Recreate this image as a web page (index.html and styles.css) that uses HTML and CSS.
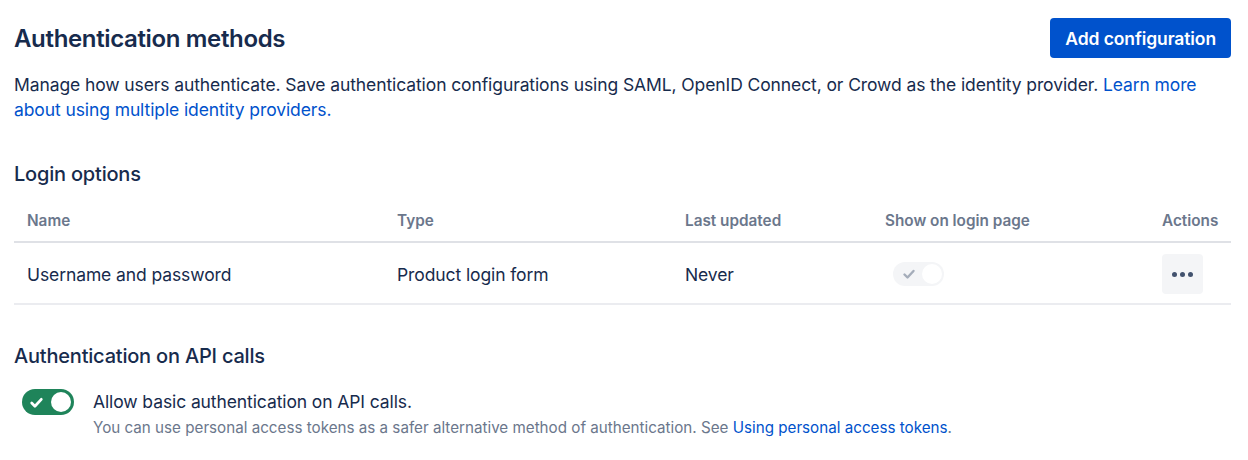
FILE: index.html
```html
<!DOCTYPE html>
<html lang="en">
<head>
<meta charset="utf-8">
<title>Authentication methods</title>
<link rel="stylesheet" href="styles.css">
</head>
<body>
<main class="page">
  <header class="page-header">
    <h1 class="title">Authentication methods</h1>
    <button class="btn-primary" type="button">Add configuration</button>
  </header>
  <p class="desc">Manage how users authenticate. Save authentication configurations using SAML, OpenID Connect, or Crowd as the identity provider. <a href="#" class="link">Learn more about using multiple identity providers.</a></p>

  <h2 class="section-title login-title">Login options</h2>
  <div class="table">
    <div class="row head">
      <div class="cell">Name</div>
      <div class="cell">Type</div>
      <div class="cell">Last updated</div>
      <div class="cell">Show on login page</div>
      <div class="cell">Actions</div>
    </div>
    <div class="row body">
      <div class="cell">Username and password</div>
      <div class="cell">Product login form</div>
      <div class="cell">Never</div>
      <div class="cell">
        <span class="toggle toggle-disabled">
          <svg class="check" viewBox="0 0 16 16" width="16" height="16"><path d="M3.5 8.5l3 3 6-6.5" fill="none" stroke="currentColor" stroke-width="2.4" stroke-linecap="round" stroke-linejoin="round"/></svg>
          <span class="knob"></span>
        </span>
      </div>
      <div class="cell">
        <button class="btn-more" type="button" aria-label="More actions">
          <span class="dot"></span><span class="dot"></span><span class="dot"></span>
        </button>
      </div>
    </div>
  </div>

  <h2 class="section-title api-title">Authentication on API calls</h2>
  <div class="api-row">
    <span class="toggle toggle-on">
      <svg class="check" viewBox="0 0 16 16" width="17" height="17"><path d="M3.5 8.5l3 3 6-6.5" fill="none" stroke="currentColor" stroke-width="2.6" stroke-linecap="round" stroke-linejoin="round"/></svg>
      <span class="knob"></span>
    </span>
    <div class="api-text">
      <div class="api-label">Allow basic authentication on API calls.</div>
      <div class="api-help">You can use personal access tokens as a safer alternative method of authentication. See <a href="#" class="link">Using personal access tokens</a>.</div>
    </div>
  </div>
</main>
</body>
</html>
```

FILE: styles.css
```css
* { box-sizing: border-box; }
html, body { margin: 0; padding: 0; background: #fff; }
body {
  font-family: Inter, "Noto Sans", "Liberation Sans", sans-serif;
  color: #172b4d;
  -webkit-font-smoothing: antialiased;
}
.page { padding: 18px 17px 0 14px; }
.page-header {
  display: flex;
  justify-content: space-between;
  align-items: center;
  height: 40px;
}
.title {
  margin: 0;
  font-size: 24px;
  font-weight: 600;
  letter-spacing: -0.35px;
  color: #172b4d;
}
.btn-primary {
  height: 40px;
  padding: 0 15px;
  border: none;
  border-radius: 4px;
  background: #0052cc;
  color: #fff;
  font-family: inherit;
  font-size: 17.5px;
  font-weight: 600;
  letter-spacing: -0.1px;
}
.desc {
  margin: 14px 0 0;
  font-size: 17.5px;
  line-height: 25px;
  letter-spacing: -0.1px;
}
.link { color: #0052cc; text-decoration: none; }
.section-title {
  margin: 0;
  font-size: 20px;
  font-weight: 500;
  line-height: 26px;
  letter-spacing: -0.2px;
}
.login-title { margin-top: 39px; }
.table { margin-top: 21px; }
.row {
  display: grid;
  grid-template-columns: 370px 288px 200px 277px 82px;
  align-items: center;
}
.cell { padding: 0 13px; }
.head {
  height: 35px;
  align-items: start;
  padding-top: 3px;
  border-bottom: 2px solid #dfe1e6;
  font-size: 15.3px;
  font-weight: 600;
  color: #6b778c;
}
.head .cell { line-height: 20px; }
.head .cell:last-child { padding-right: 13px; text-align: right; }
.body {
  height: 62px;
  padding-top: 2px;
  border-bottom: 2px solid #ebecf0;
  font-size: 17.5px;
  letter-spacing: -0.1px;
}
.toggle {
  position: relative;
  display: inline-flex;
  align-items: center;
  border-radius: 13px;
  vertical-align: middle;
}
.toggle .knob {
  position: absolute;
  top: 3px;
  right: 3px;
  border-radius: 50%;
  background: #fff;
}
.toggle-disabled {
  width: 51px;
  height: 24px;
  margin-left: 8px;
  padding-left: 8px;
  background: #f4f5f7;
  color: #a5adba;
}
.toggle-disabled .knob { width: 20px; height: 20px; top: 2px; right: 2px; }
.btn-more {
  width: 41px;
  height: 40px;
  border: none;
  border-radius: 4px;
  background: #f4f5f7;
  display: inline-flex;
  align-items: center;
  justify-content: center;
  gap: 3px;
  padding: 0;
}
.dot { width: 5px; height: 5px; border-radius: 50%; background: #42526e; }
.api-title { margin-top: 38px; }
.api-row {
  display: flex;
  align-items: flex-start;
  margin-top: 20px;
}
.toggle-on {
  width: 52px;
  height: 26px;
  margin-left: 8px;
  padding-left: 6px;
  background: #1f845a;
  color: #fff;
  flex: none;
}
.toggle-on .knob { width: 20px; height: 20px; }
.api-text { margin-left: 19px; }
.api-label {
  font-size: 17.5px;
  line-height: 26px;
  letter-spacing: -0.1px;
}
.api-help {
  margin-top: 3px;
  font-size: 15.2px;
  line-height: 20px;
  color: #6b778c;
}
```
